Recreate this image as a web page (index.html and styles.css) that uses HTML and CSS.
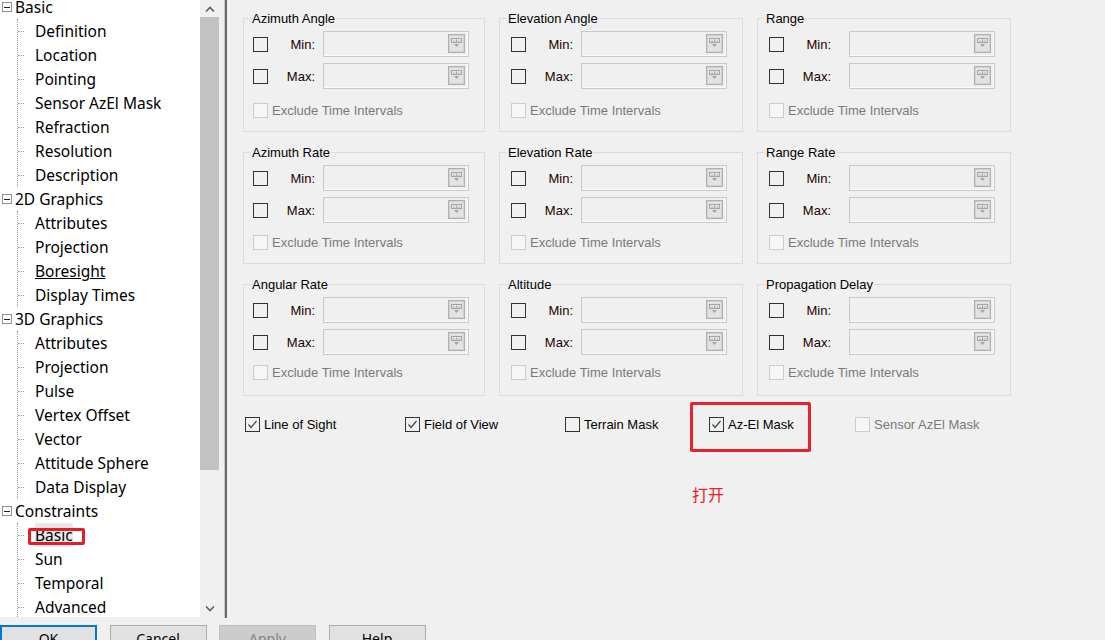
FILE: index.html
```html
<!DOCTYPE html>
<html>
<head>
<meta charset="utf-8">
<link rel="stylesheet" href="styles.css">
</head>
<body>
<div class="main">
  <div class="tree">
    <div class="tree-inner">
      <div class="node"><span class="tog"></span><span class="lbl">Basic</span></div>
      <div class="kids">
        <div class="leaf"><span class="conn"></span><span class="lbl">Definition</span></div>
        <div class="leaf"><span class="conn"></span><span class="lbl">Location</span></div>
        <div class="leaf"><span class="conn"></span><span class="lbl">Pointing</span></div>
        <div class="leaf"><span class="conn"></span><span class="lbl">Sensor AzEl Mask</span></div>
        <div class="leaf"><span class="conn"></span><span class="lbl">Refraction</span></div>
        <div class="leaf"><span class="conn"></span><span class="lbl">Resolution</span></div>
        <div class="leaf"><span class="conn"></span><span class="lbl">Description</span></div>
      </div>
      <div class="node"><span class="tog"></span><span class="lbl">2D Graphics</span></div>
      <div class="kids">
        <div class="leaf"><span class="conn"></span><span class="lbl">Attributes</span></div>
        <div class="leaf"><span class="conn"></span><span class="lbl">Projection</span></div>
        <div class="leaf"><span class="conn"></span><span class="lbl hover">Boresight</span></div>
        <div class="leaf"><span class="conn"></span><span class="lbl">Display Times</span></div>
      </div>
      <div class="node"><span class="tog"></span><span class="lbl">3D Graphics</span></div>
      <div class="kids">
        <div class="leaf"><span class="conn"></span><span class="lbl">Attributes</span></div>
        <div class="leaf"><span class="conn"></span><span class="lbl">Projection</span></div>
        <div class="leaf"><span class="conn"></span><span class="lbl">Pulse</span></div>
        <div class="leaf"><span class="conn"></span><span class="lbl">Vertex Offset</span></div>
        <div class="leaf"><span class="conn"></span><span class="lbl">Vector</span></div>
        <div class="leaf"><span class="conn"></span><span class="lbl">Attitude Sphere</span></div>
        <div class="leaf"><span class="conn"></span><span class="lbl">Data Display</span></div>
      </div>
      <div class="node"><span class="tog"></span><span class="lbl">Constraints</span></div>
      <div class="kids">
        <div class="leaf"><span class="conn"></span><span class="lbl selected">Basic<span class="mark-box"></span></span></div>
        <div class="leaf"><span class="conn"></span><span class="lbl">Sun</span></div>
        <div class="leaf"><span class="conn"></span><span class="lbl">Temporal</span></div>
        <div class="leaf"><span class="conn"></span><span class="lbl">Advanced</span></div>
      </div>
    </div>
  </div>
  <div class="vscroll">
    <div class="arrow"><svg width="10" height="6" viewBox="0 0 10 6"><polyline points="1,5.5 5,1.5 9,5.5" fill="none" stroke="#606060" stroke-width="1.6"/></svg></div>
    <div class="track"><div class="thumb"></div></div>
    <div class="arrow"><svg width="10" height="6" viewBox="0 0 10 6"><polyline points="1,0.5 5,4.5 9,0.5" fill="none" stroke="#606060" stroke-width="1.6"/></svg></div>
  </div>
  <div class="splitter"></div>
  <div class="content">
    <div class="grid">
      <div class="group c1 r1">
        <div class="gtitle">Azimuth Angle</div>
        <div class="fields">
          <div class="frow"><span class="cb"></span><span class="flabel">Min:</span><span class="inp"><span class="ibtn"><svg width="11" height="10" viewBox="0 0 11 10"><rect x="0.5" y="0.5" width="10" height="4" fill="none" stroke="#a4a4a4"/><path d="M3 2.5v2M5.5 1.5v3M8 2.5v2" stroke="#a4a4a4"/><polygon points="3,6 8,6 5.5,9" fill="#a4a4a4"/></svg></span></span></div>
          <div class="frow"><span class="cb"></span><span class="flabel">Max:</span><span class="inp"><span class="ibtn"><svg width="11" height="10" viewBox="0 0 11 10"><rect x="0.5" y="0.5" width="10" height="4" fill="none" stroke="#a4a4a4"/><path d="M3 2.5v2M5.5 1.5v3M8 2.5v2" stroke="#a4a4a4"/><polygon points="3,6 8,6 5.5,9" fill="#a4a4a4"/></svg></span></span></div>
          <div class="excl"><span class="cb dis"></span><span class="xlabel">Exclude Time Intervals</span></div>
        </div>
      </div>
      <div class="group c2 r1">
        <div class="gtitle">Elevation Angle</div>
        <div class="fields">
          <div class="frow"><span class="cb"></span><span class="flabel">Min:</span><span class="inp"><span class="ibtn"><svg width="11" height="10" viewBox="0 0 11 10"><rect x="0.5" y="0.5" width="10" height="4" fill="none" stroke="#a4a4a4"/><path d="M3 2.5v2M5.5 1.5v3M8 2.5v2" stroke="#a4a4a4"/><polygon points="3,6 8,6 5.5,9" fill="#a4a4a4"/></svg></span></span></div>
          <div class="frow"><span class="cb"></span><span class="flabel">Max:</span><span class="inp"><span class="ibtn"><svg width="11" height="10" viewBox="0 0 11 10"><rect x="0.5" y="0.5" width="10" height="4" fill="none" stroke="#a4a4a4"/><path d="M3 2.5v2M5.5 1.5v3M8 2.5v2" stroke="#a4a4a4"/><polygon points="3,6 8,6 5.5,9" fill="#a4a4a4"/></svg></span></span></div>
          <div class="excl"><span class="cb dis"></span><span class="xlabel">Exclude Time Intervals</span></div>
        </div>
      </div>
      <div class="group c3 r1">
        <div class="gtitle">Range</div>
        <div class="fields">
          <div class="frow"><span class="cb"></span><span class="flabel">Min:</span><span class="inp"><span class="ibtn"><svg width="11" height="10" viewBox="0 0 11 10"><rect x="0.5" y="0.5" width="10" height="4" fill="none" stroke="#a4a4a4"/><path d="M3 2.5v2M5.5 1.5v3M8 2.5v2" stroke="#a4a4a4"/><polygon points="3,6 8,6 5.5,9" fill="#a4a4a4"/></svg></span></span></div>
          <div class="frow"><span class="cb"></span><span class="flabel">Max:</span><span class="inp"><span class="ibtn"><svg width="11" height="10" viewBox="0 0 11 10"><rect x="0.5" y="0.5" width="10" height="4" fill="none" stroke="#a4a4a4"/><path d="M3 2.5v2M5.5 1.5v3M8 2.5v2" stroke="#a4a4a4"/><polygon points="3,6 8,6 5.5,9" fill="#a4a4a4"/></svg></span></span></div>
          <div class="excl"><span class="cb dis"></span><span class="xlabel">Exclude Time Intervals</span></div>
        </div>
      </div>

      <div class="group c1 r2">
        <div class="gtitle">Azimuth Rate</div>
        <div class="fields">
          <div class="frow"><span class="cb"></span><span class="flabel">Min:</span><span class="inp"><span class="ibtn"><svg width="11" height="10" viewBox="0 0 11 10"><rect x="0.5" y="0.5" width="10" height="4" fill="none" stroke="#a4a4a4"/><path d="M3 2.5v2M5.5 1.5v3M8 2.5v2" stroke="#a4a4a4"/><polygon points="3,6 8,6 5.5,9" fill="#a4a4a4"/></svg></span></span></div>
          <div class="frow"><span class="cb"></span><span class="flabel">Max:</span><span class="inp"><span class="ibtn"><svg width="11" height="10" viewBox="0 0 11 10"><rect x="0.5" y="0.5" width="10" height="4" fill="none" stroke="#a4a4a4"/><path d="M3 2.5v2M5.5 1.5v3M8 2.5v2" stroke="#a4a4a4"/><polygon points="3,6 8,6 5.5,9" fill="#a4a4a4"/></svg></span></span></div>
          <div class="excl"><span class="cb dis"></span><span class="xlabel">Exclude Time Intervals</span></div>
        </div>
      </div>
      <div class="group c2 r2">
        <div class="gtitle">Elevation Rate</div>
        <div class="fields">
          <div class="frow"><span class="cb"></span><span class="flabel">Min:</span><span class="inp"><span class="ibtn"><svg width="11" height="10" viewBox="0 0 11 10"><rect x="0.5" y="0.5" width="10" height="4" fill="none" stroke="#a4a4a4"/><path d="M3 2.5v2M5.5 1.5v3M8 2.5v2" stroke="#a4a4a4"/><polygon points="3,6 8,6 5.5,9" fill="#a4a4a4"/></svg></span></span></div>
          <div class="frow"><span class="cb"></span><span class="flabel">Max:</span><span class="inp"><span class="ibtn"><svg width="11" height="10" viewBox="0 0 11 10"><rect x="0.5" y="0.5" width="10" height="4" fill="none" stroke="#a4a4a4"/><path d="M3 2.5v2M5.5 1.5v3M8 2.5v2" stroke="#a4a4a4"/><polygon points="3,6 8,6 5.5,9" fill="#a4a4a4"/></svg></span></span></div>
          <div class="excl"><span class="cb dis"></span><span class="xlabel">Exclude Time Intervals</span></div>
        </div>
      </div>
      <div class="group c3 r2">
        <div class="gtitle">Range Rate</div>
        <div class="fields">
          <div class="frow"><span class="cb"></span><span class="flabel">Min:</span><span class="inp"><span class="ibtn"><svg width="11" height="10" viewBox="0 0 11 10"><rect x="0.5" y="0.5" width="10" height="4" fill="none" stroke="#a4a4a4"/><path d="M3 2.5v2M5.5 1.5v3M8 2.5v2" stroke="#a4a4a4"/><polygon points="3,6 8,6 5.5,9" fill="#a4a4a4"/></svg></span></span></div>
          <div class="frow"><span class="cb"></span><span class="flabel">Max:</span><span class="inp"><span class="ibtn"><svg width="11" height="10" viewBox="0 0 11 10"><rect x="0.5" y="0.5" width="10" height="4" fill="none" stroke="#a4a4a4"/><path d="M3 2.5v2M5.5 1.5v3M8 2.5v2" stroke="#a4a4a4"/><polygon points="3,6 8,6 5.5,9" fill="#a4a4a4"/></svg></span></span></div>
          <div class="excl"><span class="cb dis"></span><span class="xlabel">Exclude Time Intervals</span></div>
        </div>
      </div>

      <div class="group c1 r3">
        <div class="gtitle">Angular Rate</div>
        <div class="fields">
          <div class="frow"><span class="cb"></span><span class="flabel">Min:</span><span class="inp"><span class="ibtn"><svg width="11" height="10" viewBox="0 0 11 10"><rect x="0.5" y="0.5" width="10" height="4" fill="none" stroke="#a4a4a4"/><path d="M3 2.5v2M5.5 1.5v3M8 2.5v2" stroke="#a4a4a4"/><polygon points="3,6 8,6 5.5,9" fill="#a4a4a4"/></svg></span></span></div>
          <div class="frow"><span class="cb"></span><span class="flabel">Max:</span><span class="inp"><span class="ibtn"><svg width="11" height="10" viewBox="0 0 11 10"><rect x="0.5" y="0.5" width="10" height="4" fill="none" stroke="#a4a4a4"/><path d="M3 2.5v2M5.5 1.5v3M8 2.5v2" stroke="#a4a4a4"/><polygon points="3,6 8,6 5.5,9" fill="#a4a4a4"/></svg></span></span></div>
          <div class="excl"><span class="cb dis"></span><span class="xlabel">Exclude Time Intervals</span></div>
        </div>
      </div>
      <div class="group c2 r3">
        <div class="gtitle">Altitude</div>
        <div class="fields">
          <div class="frow"><span class="cb"></span><span class="flabel">Min:</span><span class="inp"><span class="ibtn"><svg width="11" height="10" viewBox="0 0 11 10"><rect x="0.5" y="0.5" width="10" height="4" fill="none" stroke="#a4a4a4"/><path d="M3 2.5v2M5.5 1.5v3M8 2.5v2" stroke="#a4a4a4"/><polygon points="3,6 8,6 5.5,9" fill="#a4a4a4"/></svg></span></span></div>
          <div class="frow"><span class="cb"></span><span class="flabel">Max:</span><span class="inp"><span class="ibtn"><svg width="11" height="10" viewBox="0 0 11 10"><rect x="0.5" y="0.5" width="10" height="4" fill="none" stroke="#a4a4a4"/><path d="M3 2.5v2M5.5 1.5v3M8 2.5v2" stroke="#a4a4a4"/><polygon points="3,6 8,6 5.5,9" fill="#a4a4a4"/></svg></span></span></div>
          <div class="excl"><span class="cb dis"></span><span class="xlabel">Exclude Time Intervals</span></div>
        </div>
      </div>
      <div class="group c3 r3">
        <div class="gtitle">Propagation Delay</div>
        <div class="fields">
          <div class="frow"><span class="cb"></span><span class="flabel">Min:</span><span class="inp"><span class="ibtn"><svg width="11" height="10" viewBox="0 0 11 10"><rect x="0.5" y="0.5" width="10" height="4" fill="none" stroke="#a4a4a4"/><path d="M3 2.5v2M5.5 1.5v3M8 2.5v2" stroke="#a4a4a4"/><polygon points="3,6 8,6 5.5,9" fill="#a4a4a4"/></svg></span></span></div>
          <div class="frow"><span class="cb"></span><span class="flabel">Max:</span><span class="inp"><span class="ibtn"><svg width="11" height="10" viewBox="0 0 11 10"><rect x="0.5" y="0.5" width="10" height="4" fill="none" stroke="#a4a4a4"/><path d="M3 2.5v2M5.5 1.5v3M8 2.5v2" stroke="#a4a4a4"/><polygon points="3,6 8,6 5.5,9" fill="#a4a4a4"/></svg></span></span></div>
          <div class="excl"><span class="cb dis"></span><span class="xlabel">Exclude Time Intervals</span></div>
        </div>
      </div>
    </div>

    <div class="checks">
      <div class="chk w1"><span class="cb on"><svg width="13" height="13" viewBox="0 0 13 13"><polyline points="2.5,6.5 5,9.5 10.5,3" fill="none" stroke="#444" stroke-width="1.2"/></svg></span><span class="clabel">Line of Sight</span></div>
      <div class="chk w2"><span class="cb on"><svg width="13" height="13" viewBox="0 0 13 13"><polyline points="2.5,6.5 5,9.5 10.5,3" fill="none" stroke="#444" stroke-width="1.2"/></svg></span><span class="clabel">Field of View</span></div>
      <div class="chk w3"><span class="cb"></span><span class="clabel">Terrain Mask</span></div>
      <div class="chk w4"><span class="cb on"><svg width="13" height="13" viewBox="0 0 13 13"><polyline points="2.5,6.5 5,9.5 10.5,3" fill="none" stroke="#444" stroke-width="1.2"/></svg></span><span class="clabel">Az-El Mask</span><span class="red-box"></span></div>
      <div class="chk"><span class="cb dis"></span><span class="clabel disabled">Sensor AzEl Mask</span></div>
    </div>
    <div class="note">打开</div>
  </div>
</div>
<div class="buttons">
  <div class="btn default">OK</div>
  <div class="btn">Cancel</div>
  <div class="btn disabled">Apply</div>
  <div class="btn">Help</div>
</div>
</body>
</html>
```

FILE: styles.css
```css
html, body {
  margin: 0;
  padding: 0;
}
body {
  width: 1105px;
  height: 640px;
  overflow: hidden;
  background: #f0f0f0;
  font-family: "Liberation Sans", Arial, sans-serif;
  font-size: 13px;
  color: #000;
}
.main {
  display: flex;
  height: 617px;
}
.tree {
  width: 200px;
  height: 617px;
  background: #fff;
  overflow: hidden;
  font-family: "Noto Sans", "Noto Sans CJK SC", sans-serif;
  font-size: 15.5px;
}
.tree-inner {
  margin-top: -5px;
}
.node, .leaf {
  height: 24px;
  line-height: 24px;
  display: flex;
  align-items: center;
  white-space: nowrap;
}
.tog {
  width: 10px;
  height: 10px;
  box-sizing: border-box;
  border: 1px solid #919191;
  margin-left: 2px;
  margin-right: 3px;
  display: flex;
  align-items: center;
  justify-content: center;
  background: #fff;
}
.tog::after {
  content: "";
  width: 6px;
  height: 1px;
  background: #222;
}
.kids {
  margin-left: 17px;
  border-left: 1px dotted #a0a0a0;
}
.conn {
  width: 6px;
  border-top: 1px dotted #a0a0a0;
  margin-right: 11px;
}
.lbl {
  position: relative;
}
.lbl.hover {
  text-decoration: underline;
}
.lbl.selected {
  background: #e8e8e8;
}
.mark-box {
  position: absolute;
  left: -7px;
  top: 5px;
  width: 57px;
  height: 17px;
  box-sizing: border-box;
  border: 3px solid #e41e26;
  border-radius: 2px;
}
.vscroll {
  width: 19px;
  height: 617px;
  background: #f0f0f0;
  display: flex;
  flex-direction: column;
}
.arrow {
  height: 17px;
  display: flex;
  align-items: center;
  justify-content: center;
}
.track {
  flex: 1;
}
.thumb {
  height: 453px;
  background: #c2c2c2;
}
.splitter {
  width: 6px;
  height: 618px;
  border-right: 2px solid #6a6a6a;
  box-shadow: inset -1px 0 0 #c8c8c8;
}
.content {
  flex: 1;
  padding: 18px 0 0 16px;
}
.grid {
  display: grid;
  grid-template-columns: 242px 244px 254px;
  grid-template-rows: 114px 112px 112px;
  column-gap: 14px;
  row-gap: 20px;
}
.group {
  border: 1px solid #dcdcdc;
  box-sizing: border-box;
}
.gtitle {
  width: fit-content;
  margin: -8px 0 0 7px;
  padding: 0 1px;
  line-height: 15px;
  background: #f0f0f0;
  white-space: nowrap;
}
.fields {
  margin-top: 5px;
}
.frow {
  display: flex;
  align-items: center;
  height: 26px;
  padding-left: 9px;
}
.c2 .frow, .c3 .frow, .c2 .excl, .c3 .excl {
  padding-left: 11px;
}
.frow + .frow {
  margin-top: 6px;
}
.cb {
  width: 15px;
  height: 15px;
  box-sizing: border-box;
  border: 1px solid #333;
  flex: none;
  display: flex;
  align-items: center;
  justify-content: center;
}
.cb.dis {
  border-color: #cccccc;
  background: #f6f6f6;
}
.flabel {
  width: 47px;
  text-align: right;
  color: #1a0000;
}
.inp {
  width: 146px;
  height: 26px;
  box-sizing: border-box;
  margin-left: 8px;
  border: 1px solid #c9c9c9;
  box-shadow: inset -1px -1px 0 #fbfbfb;
  background: #f0f0f0;
  display: flex;
  align-items: center;
  justify-content: flex-end;
  padding-right: 3px;
  padding-bottom: 1px;
}
.c3 .inp {
  margin-left: 18px;
}
.ibtn {
  width: 17px;
  height: 19px;
  box-sizing: border-box;
  border: 1px solid #b0b0b0;
  box-shadow: inset 0 0 0 1px #d2d2d2;
  background: #e3e3e3;
  display: flex;
  justify-content: center;
  padding-top: 3px;
}
.excl {
  display: flex;
  align-items: center;
  height: 16px;
  margin-top: 13px;
  padding-left: 9px;
}
.r2 .excl {
  margin-top: 11px;
}
.r3 .excl {
  margin-top: 9px;
}
.xlabel {
  margin-left: 4px;
  color: #7a7a7a;
  white-space: nowrap;
}
.checks {
  display: flex;
  align-items: center;
  height: 16px;
  margin-top: 20px;
  padding-left: 2px;
}
.chk {
  display: flex;
  align-items: center;
  position: relative;
  white-space: nowrap;
}
.w1, .w2 { width: 160px; }
.w3 { width: 144px; }
.w4 { width: 146px; }
.clabel {
  margin-left: 4px;
}
.clabel.disabled {
  color: #7a7a7a;
}
.red-box {
  position: absolute;
  left: -19px;
  top: -15px;
  width: 121px;
  height: 50px;
  box-sizing: border-box;
  border: 3px solid #e8212a;
  border-radius: 2px;
}
.note {
  margin: 52px 0 0 449px;
  font-family: "Noto Sans CJK SC", sans-serif;
  font-size: 16px;
  line-height: 20px;
  color: #e8212a;
}
.buttons {
  display: flex;
  gap: 12.5px;
  margin-top: 8px;
}
.btn {
  width: 97px;
  height: 26px;
  box-sizing: border-box;
  border: 1px solid #adadad;
  background: #e1e1e1;
  display: flex;
  align-items: center;
  justify-content: center;
  font-family: "Noto Sans", sans-serif;
  font-size: 14px;
  line-height: 19px;
  color: #000;
}
.btn.default {
  border: 2px solid #0078d7;
}
.btn.disabled {
  background: #cccccc;
  border-color: #bfbfbf;
  color: #838383;
}
```
